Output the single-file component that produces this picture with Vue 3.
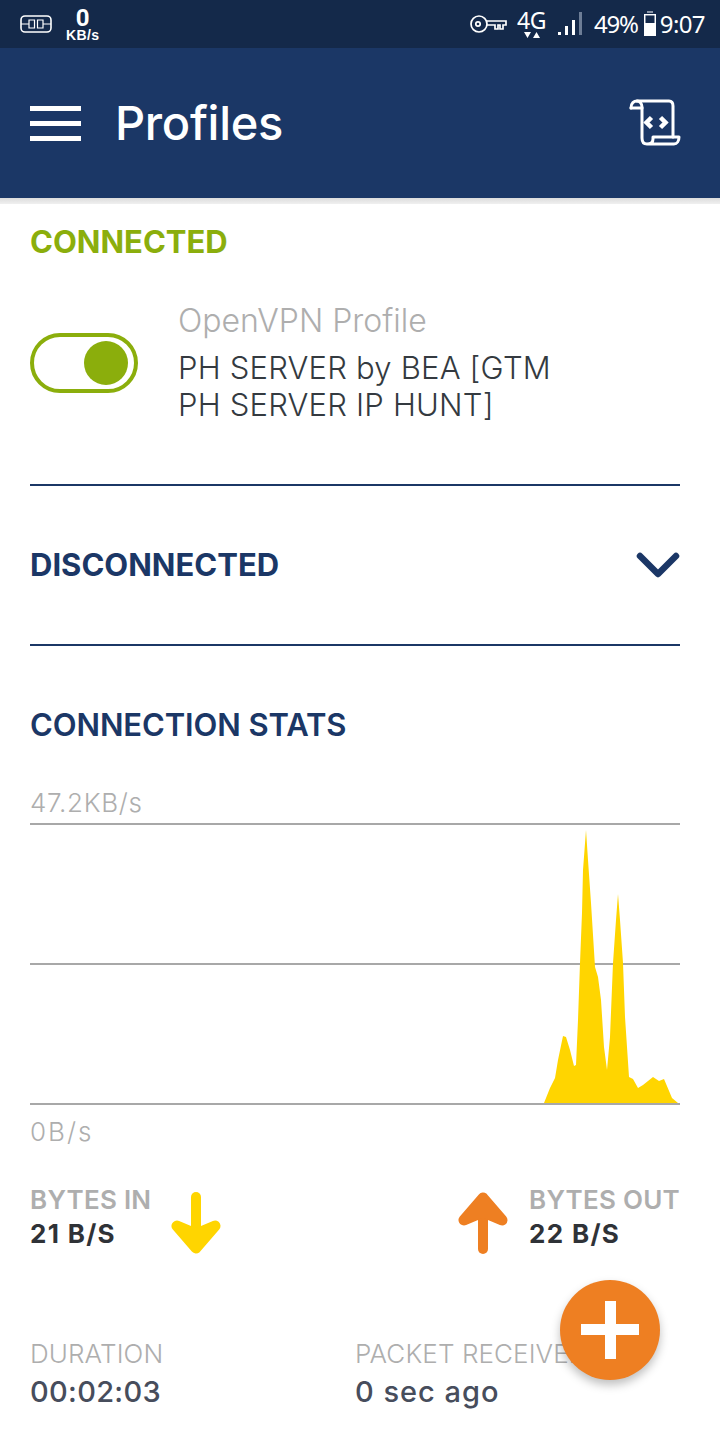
<script setup>
const areaPoints = '514,280 520,265 525,255 528,237 533,213 536,214 540,227 544,243 546,242 548,197 550,140 552,90 553,47 556,7 558,37 561,80 565,144 568,154 571,177 574,224 577,247 580,214 583,140 586,97 588,71 590,97 593,140 595,194 599,254 603,256 608,265 613,262 623,254 629,258 634,256 642,275 648,280'
</script>

<template>
  <div class="screen">
    <div class="statusbar">
      <div class="status-left">
        <svg class="sim" width="32" height="20" viewBox="0 0 32 20" fill="none" stroke="#fff" stroke-width="1.6">
          <rect x="1" y="2" width="30" height="16" rx="4" />
          <path d="M1 10h8M23 10h8M9 6h5.500v8H9zM17.500 6H23v8h-5.500z" stroke-width="1.2" />
        </svg>
        <div class="speed"><span class="speed-num">0</span><span class="speed-unit">KB/s</span></div>
      </div>
      <div class="status-right">
        <svg class="key" width="38" height="20" viewBox="0 0 38 20" fill="none" stroke="#fff" stroke-width="1.7">
          <circle cx="10" cy="10" r="8" />
          <circle cx="9" cy="10" r="2.2" />
          <path d="M18 7h19v4h-3v4h-3v-4h-2v4h-3v-4h-8" />
        </svg>
        <div class="net"><span class="net-4g">4G</span><svg width="16" height="7" viewBox="0 0 16 7" fill="#fff"><path d="M0 0h7L3.500 6zM9 6h7l-3.500-6z" /></svg></div>
        <svg class="signal" width="28" height="26" viewBox="0 0 28 26">
          <path fill="#fff" d="M1 21h3v3H1zM8 15h3v9H8zM15 9h3v15h-3z" />
          <path fill="#6d7d96" d="M22 1h3v23h-3z" />
        </svg>
        <span class="pct">49%</span>
        <svg class="batt" width="14" height="26" viewBox="0 0 14 26">
          <path fill="#8b96a8" d="M4 0h6v2H4zM1 3h12v10H1z" />
          <path fill="#14294a" d="M2.500 4.500h9V12h-9z" />
          <path fill="#fff" d="M1 12h12v13H1z" />
          <path fill="#fff" d="M1 3h12v1.300H1zM1 3h1.300v10H1zM11.700 3H13v10h-1.300z" />
        </svg>
        <span class="time">9:07</span>
      </div>
    </div>

    <header class="toolbar">
      <div class="burger"><i></i><i></i><i></i></div>
      <h1 class="title">Profiles</h1>
      <svg class="script" width="54" height="50" viewBox="0 0 54 50" fill="none" stroke="#fff" stroke-width="3" stroke-linejoin="round" stroke-linecap="round">
        <path d="M3 10C3 5 6 3 9 3H41C44 3 45 5 45 8V39" />
        <path d="M3 10H14" />
        <path d="M9 3C12 3 14 6 14 9V40C14 44 16 46 19 46H46C49 46 51 43 51 39H25V41C25 44 23 46 19 46" />
        <path d="M23.500 19.500l-5 5 5 5M32.500 19.500l5 5-5 5" stroke-width="4.500" stroke-linecap="butt" stroke-linejoin="miter" />
      </svg>
    </header>
    <div class="toolbar-shadow"></div>

    <main class="content">
      <h2 class="heading connected">CONNECTED</h2>

      <div class="profile">
        <div class="toggle"><span class="knob"></span></div>
        <div class="profile-text">
          <div class="profile-type">OpenVPN Profile</div>
          <div class="profile-name">PH SERVER by BEA [GTM<br />PH SERVER IP HUNT]</div>
        </div>
      </div>

      <div class="disconnected">
        <h2 class="heading navy">DISCONNECTED</h2>
        <svg width="44" height="26" viewBox="0 0 44 26" fill="none" stroke="#1b3766" stroke-width="6.500" stroke-linecap="round" stroke-linejoin="round">
          <path d="M4 4l18 18L40 4" />
        </svg>
      </div>

      <h2 class="heading navy stats-title">CONNECTION STATS</h2>

      <div class="axis top-axis">47.2KB/s</div>
      <svg class="chart" width="650" height="282" viewBox="0 0 650 282">
        <path d="M0 1h650M0 141h650M0 281h650" stroke="#a8a8a8" stroke-width="2" fill="none" />
        <polygon :points="areaPoints" fill="#ffd500" />
      </svg>
      <div class="axis bottom-axis">0B/s</div>

      <div class="bytes">
        <div class="bytes-group">
          <div class="bytes-col">
            <div class="label bold">BYTES IN</div>
            <div class="bytes-val">21 B/S</div>
          </div>
          <svg class="arrow-in" width="50" height="62" viewBox="0 0 50 62" fill="none" stroke="#ffd500" stroke-width="10" stroke-linecap="round" stroke-linejoin="round">
            <path d="M25 5V55" />
            <path d="M6 34L25 56 44 34 25 42Z" fill="#ffd500" stroke-width="11" />
          </svg>
        </div>
        <div class="bytes-group">
          <svg class="arrow-out" width="50" height="62" viewBox="0 0 50 62" fill="none" stroke="#ee7f22" stroke-width="10" stroke-linecap="round" stroke-linejoin="round">
            <path d="M25 57V7" />
            <path d="M6 28L25 6 44 28 25 20Z" fill="#ee7f22" stroke-width="11" />
          </svg>
          <div class="bytes-col">
            <div class="label bold">BYTES OUT</div>
            <div class="bytes-val">22 B/S</div>
          </div>
        </div>
      </div>

      <div class="meta">
        <div class="meta-col duration">
          <div class="label">DURATION</div>
          <div class="meta-val">00:02:03</div>
        </div>
        <div class="meta-col">
          <div class="label">PACKET RECEIVED</div>
          <div class="meta-val ago">0 sec ago</div>
        </div>
      </div>
    </main>

    <button class="fab" aria-label="Add"><i class="h"></i><i class="v"></i></button>
  </div>
</template>

<style>
html, body { margin: 0; background: #fff; }
</style>

<style scoped>
.screen {
  position: relative;
  width: 720px;
  height: 1440px;
  overflow: hidden;
  background: #fff;
  font-family: Inter, Lato, sans-serif;
}
.statusbar {
  height: 48px;
  background: #14294a;
  color: #fff;
  display: flex;
  justify-content: space-between;
  align-items: center;
}
.status-left { display: flex; align-items: center; padding-left: 20px; gap: 14px; }
.speed { display: flex; flex-direction: column; align-items: center; padding-top: 2px; }
.speed-num { font: 700 24px/21px Roboto, sans-serif; }
.speed-unit { font: 700 14px/13px "Liberation Sans", sans-serif; letter-spacing: 0.4px; }
.status-right { display: flex; align-items: center; padding-right: 15px; }
.key { margin-right: 10px; }
.net { display: flex; flex-direction: column; align-items: center; margin-right: 11px; }
.net-4g { font: 400 23px/23px "Noto Sans", sans-serif; letter-spacing: -0.5px; }
.signal { margin-right: 9px; }
.pct, .time { font: 400 24px/26px "Noto Sans", sans-serif; }
.pct { letter-spacing: -1.2px; margin-right: 5px; }
.time { margin-left: 3px; letter-spacing: -0.6px; }

.toolbar {
  height: 150px;
  background: #1b3766;
  display: flex;
  align-items: center;
  padding: 0 38px 0 30px;
  box-sizing: border-box;
  color: #fff;
}
.burger { width: 51px; height: 35px; display: flex; flex-direction: column; justify-content: space-between; margin-right: 34px; }
.burger i { display: block; height: 5px; background: #fff; }
.title { margin: 0; flex: 1; font-weight: 500; font-size: 47px; line-height: 56px; letter-spacing: -0.3px; }
.toolbar-shadow { height: 6px; background: linear-gradient(#dcdcdc, #f0f0f0); }

.content { padding: 0 40px 0 30px; }
.heading { margin: 0; font-weight: 700; font-size: 31px; line-height: 36px; }
.connected { color: #8bae0c; padding-top: 20px; }
.navy { color: #1b3766; }

.profile { display: flex; align-items: center; height: 226px; padding-bottom: 20px; box-sizing: border-box; border-bottom: 2px solid #1b3766; }
.toggle {
  width: 108px; height: 60px; box-sizing: border-box;
  border: 4px solid #8bae0c; border-radius: 30px;
  display: flex; align-items: center; justify-content: flex-end;
  padding-right: 6px; margin-right: 40px; margin-top: 2px;
}
.knob { width: 44px; height: 44px; border-radius: 50%; background: #8bae0c; }
.profile-type { font-size: 32px; font-weight: 300; line-height: 40px; color: #aeaeae; margin-bottom: 8px; }
.profile-name { font-size: 31px; font-weight: 300; line-height: 37px; color: #343a40; letter-spacing: 0.2px; white-space: nowrap; }

.disconnected {
  height: 158px; display: flex; align-items: center; justify-content: space-between;
  border-bottom: 2px solid #1b3766;
}
.stats-title { font-weight: 600; margin-top: 61px; letter-spacing: -0.1px; }

.axis { font-size: 26px; font-weight: 300; line-height: 32px; color: #aeaeae; letter-spacing: 0.7px; }
.top-axis { margin-top: 44px; }
.chart { display: block; margin-top: 4px; }
.bottom-axis { margin-top: 11px; letter-spacing: 2px; }

.bytes { display: flex; justify-content: space-between; margin-top: 34px; }
.bytes-group { display: flex; align-items: flex-start; }
.bytes-col { display: flex; flex-direction: column; }
.label { font-size: 26px; font-weight: 300; line-height: 36px; color: #aeaeae; white-space: nowrap; letter-spacing: 0.1px; }
.label.bold { font-weight: 600; letter-spacing: 0.25px; }
.bytes-val { font-size: 26px; font-weight: 700; line-height: 32px; color: #2f3237; letter-spacing: 1.3px; }
.arrow-in { margin-left: 20px; margin-top: 10px; }
.arrow-out { margin-right: 21px; margin-top: 10px; }

.meta { display: flex; margin-top: 82px; }
.meta-col { display: flex; flex-direction: column; }
.duration { width: 325px; }
.meta-val { font-size: 29px; font-weight: 500; line-height: 40px; color: #474d5c; white-space: nowrap; letter-spacing: 0.3px; }
.ago { letter-spacing: 1px; }

.fab {
  position: absolute; left: 560px; top: 1280px;
  width: 100px; height: 100px; border: 0; padding: 0; border-radius: 50%;
  background: #ee7f22; box-shadow: 0 5px 10px rgba(0,0,0,.25);
}
.fab i { position: absolute; background: #fff; }
.fab .h { left: 21px; top: 44px; width: 58px; height: 11px; }
.fab .v { left: 45px; top: 21px; width: 11px; height: 58px; }
</style>
